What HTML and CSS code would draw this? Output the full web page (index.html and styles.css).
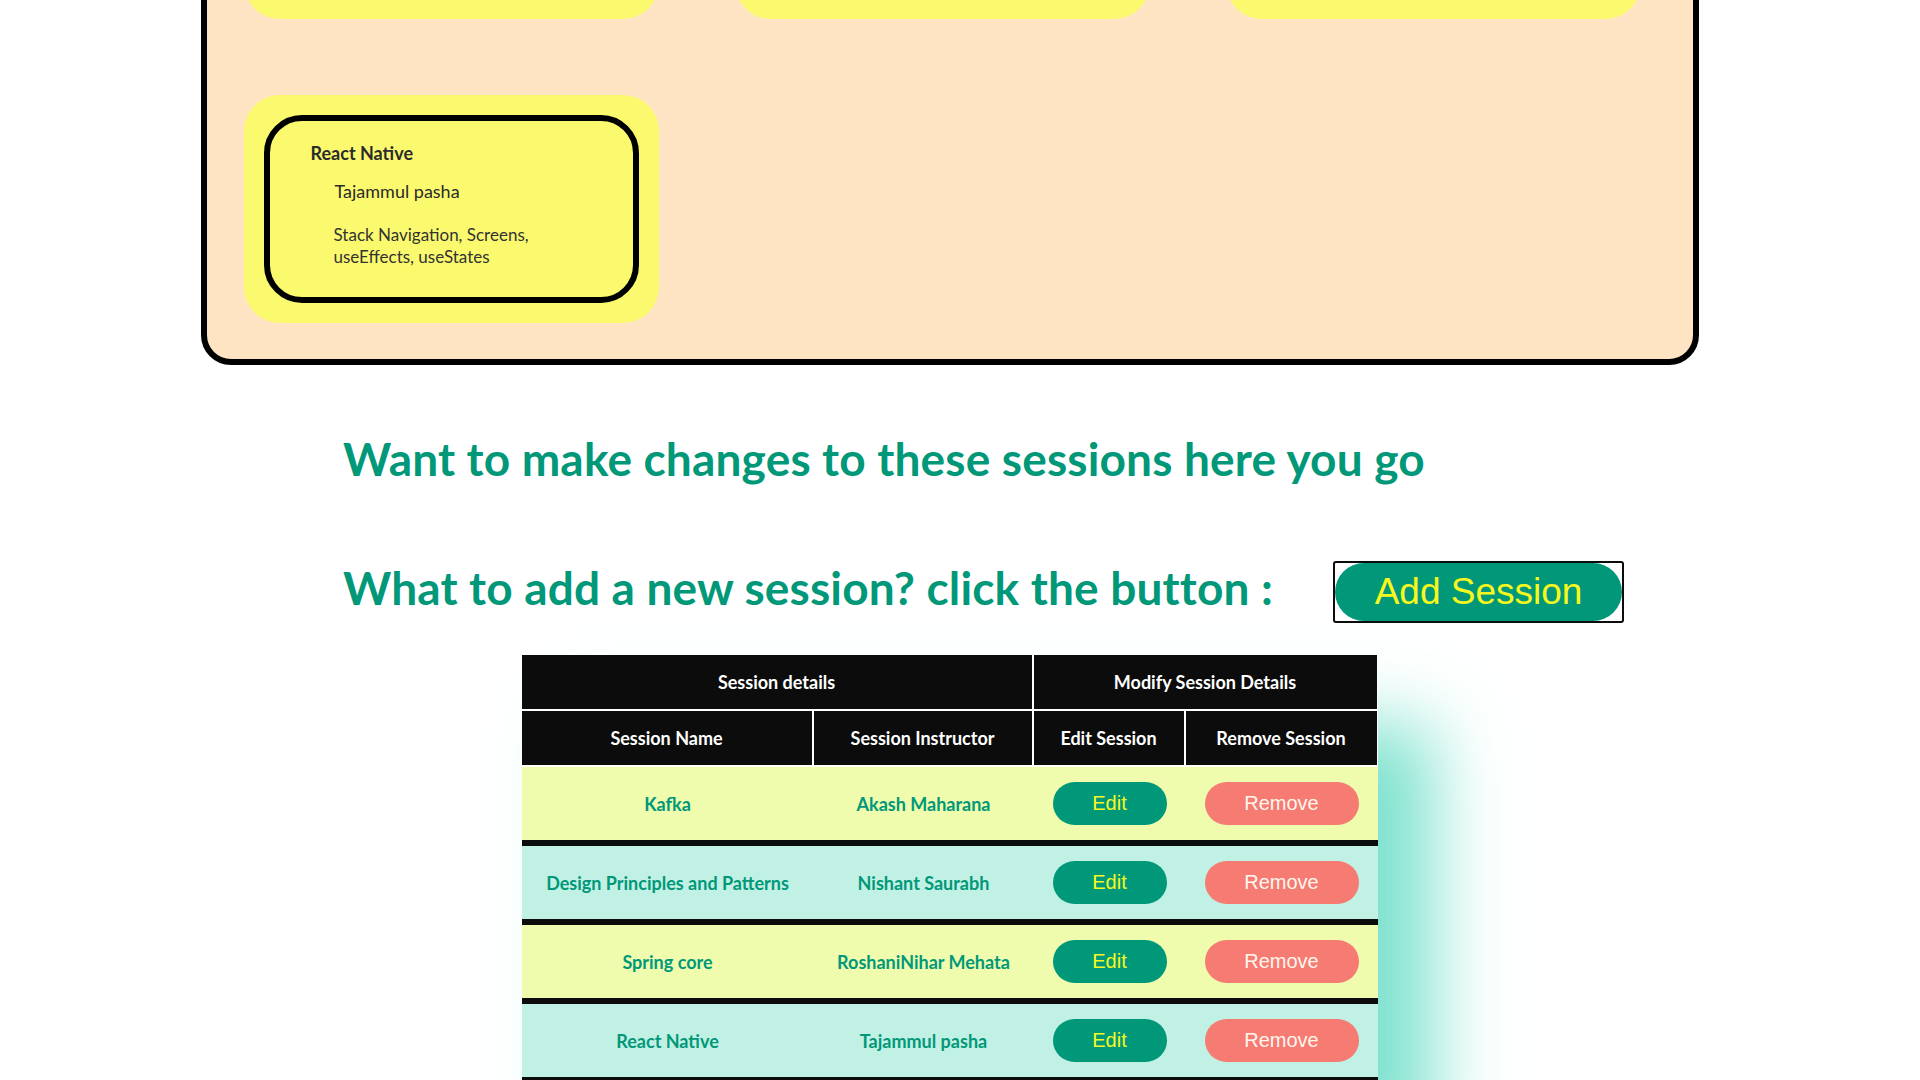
FILE: index.html
```html
<!DOCTYPE html>
<html lang="en">
<head>
<meta charset="utf-8">
<title>Sessions</title>
<link rel="stylesheet" href="styles.css">
</head>
<body>
<section class="board">
  <div class="card"><div class="card-inner"></div></div>
  <div class="card"><div class="card-inner"></div></div>
  <div class="card"><div class="card-inner"></div></div>
  <div class="card">
    <div class="card-inner">
      <h3 class="card-name">React Native</h3>
      <p class="card-instructor">Tajammul pasha</p>
      <p class="card-topics">Stack Navigation, Screens, useEffects, useStates</p>
    </div>
  </div>
</section>

<section class="manage">
  <h2 class="manage-heading">Want to make changes to these sessions here you go</h2>
  <div class="add-row">
    <h2 class="manage-heading">What to add a new session? click the button :</h2>
    <button class="add-btn" type="button"><span class="add-pill">Add Session</span></button>
  </div>
</section>

<table class="sessions">
  <colgroup>
    <col class="col-name">
    <col class="col-instructor">
    <col class="col-edit">
    <col class="col-remove">
  </colgroup>
  <thead>
    <tr>
      <th colspan="2">Session details</th>
      <th colspan="2">Modify Session Details</th>
    </tr>
    <tr>
      <th>Session Name</th>
      <th>Session Instructor</th>
      <th>Edit Session</th>
      <th>Remove Session</th>
    </tr>
  </thead>
  <tbody>
    <tr>
      <td>Kafka</td>
      <td>Akash Maharana</td>
      <td><button class="btn btn-edit" type="button">Edit</button></td>
      <td><button class="btn btn-remove" type="button">Remove</button></td>
    </tr>
    <tr>
      <td>Design Principles and Patterns</td>
      <td>Nishant Saurabh</td>
      <td><button class="btn btn-edit" type="button">Edit</button></td>
      <td><button class="btn btn-remove" type="button">Remove</button></td>
    </tr>
    <tr>
      <td>Spring core</td>
      <td>RoshaniNihar Mehata</td>
      <td><button class="btn btn-edit" type="button">Edit</button></td>
      <td><button class="btn btn-remove" type="button">Remove</button></td>
    </tr>
    <tr>
      <td>React Native</td>
      <td>Tajammul pasha</td>
      <td><button class="btn btn-edit" type="button">Edit</button></td>
      <td><button class="btn btn-remove" type="button">Remove</button></td>
    </tr>
  </tbody>
</table>
<script src="script.js"></script>
</body>
</html>
```

FILE: styles.css
```css
html, body {
  background: #ffffff;
}
body {
  margin: 8px;
  padding-right: 21px;
  font-family: Lato, "Noto Sans", sans-serif;
  color: #2b2b2b;
}

/* Session board */
.board {
  width: 1498px;
  box-sizing: border-box;
  margin: 0 auto;
  border: 6px solid #000;
  border-radius: 30px;
  background: #ffe4c4;
  padding: 37px 52px 36px 37px;
  display: flex;
  flex-wrap: wrap;
  column-gap: 76px;
  row-gap: 76px;
}
.card {
  width: 415px;
  height: 228px;
  box-sizing: border-box;
  padding: 20px;
  background: #fbfa6e;
  border-radius: 36px;
}
.card-inner {
  height: 188px;
  box-sizing: border-box;
  border: 6px solid #000;
  border-radius: 38px;
  padding: 20px 20px 0 41px;
  overflow: hidden;
}
.card-name {
  margin: 0;
  font-family: Lato, sans-serif;
  font-weight: 700;
  font-size: 18px;
  line-height: 24px;
  color: #2b2b2b;
}
.card-instructor {
  margin: 14px 0 0 24px;
  font-family: "Comic Sans MS", Lato, sans-serif;
  font-size: 18px;
  line-height: 24px;
  color: #2b2b2b;
}
.card-topics {
  margin: 21px 0 0 23px;
  max-width: 250px;
  font-family: Lato, sans-serif;
  font-size: 17px;
  line-height: 22px;
  color: #333;
}

/* Manage section */
.manage {
  padding-left: 335px;
  margin-top: 66px;
}
.manage-heading {
  margin: 0;
  font-family: Lato, sans-serif;
  font-weight: 700;
  font-size: 46px;
  line-height: 55px;
  letter-spacing: 0.17px;
  color: #009879;
  white-space: nowrap;
}
.add-row {
  margin-top: 74px;
  display: flex;
  align-items: flex-start;
}
.add-btn {
  margin: 1px 0 0 60px;
  padding: 0;
  border: 2px solid #0c0c0c;
  border-radius: 3px;
  background: #ffffff;
  cursor: pointer;
  display: flex;
}
.add-pill {
  display: block;
  width: 287px;
  padding: 8px 0;
  border-radius: 30px;
  background: #009879;
  color: #f7f71e;
  font-family: "Liberation Sans", Arial, sans-serif;
  font-size: 37px;
  line-height: 42px;
  text-align: center;
}

/* Table */
.sessions {
  width: 856px;
  margin: 32px auto 0;
  border-collapse: separate;
  border-spacing: 0;
  table-layout: fixed;
  box-shadow: 55px 70px 70px rgb(125, 226, 206);
}
.col-name { width: 292px; }
.col-instructor { width: 220px; }
.col-edit { width: 152px; }
.col-remove { width: 192px; }

.sessions th {
  background: #0c0c0c;
  color: #ffffff;
  font-family: "Comic Sans MS", Lato, sans-serif;
  font-weight: 700;
  font-size: 18px;
  line-height: 54px;
  padding: 0;
  border-bottom: 2px solid #ffffff;
  border-right: 2px solid #ffffff;
  text-align: center;
}
.sessions th:last-child {
  border-right-width: 1px;
}
.sessions td {
  padding: 15px 0;
  text-align: center;
  vertical-align: middle;
  border-bottom: 6px solid #0c0c0c;
  font-family: "Comic Sans MS", Lato, sans-serif;
  font-weight: 700;
  font-size: 18px;
  color: #009879;
}
.sessions tbody tr:nth-child(odd) td {
  background: #effcae;
}
.sessions tbody tr:nth-child(even) td {
  background: #c1f1e4;
}

.btn {
  display: inline-block;
  vertical-align: middle;
  border: 0;
  border-radius: 22px;
  padding: 10px 0;
  font-family: "Liberation Sans", Arial, sans-serif;
  font-size: 20px;
  line-height: 23px;
  cursor: pointer;
}
.btn-edit {
  width: 114px;
  background: #009879;
  color: #f7f71e;
}
.btn-remove {
  width: 154px;
  background: #f67b72;
  color: #fff7ee;
}
```

FILE: script.js
```js
(function () {
  var board = document.querySelector('.board');
  var top = board.getBoundingClientRect().top + window.scrollY;
  window.scrollTo(0, top + 252);
})();
```
